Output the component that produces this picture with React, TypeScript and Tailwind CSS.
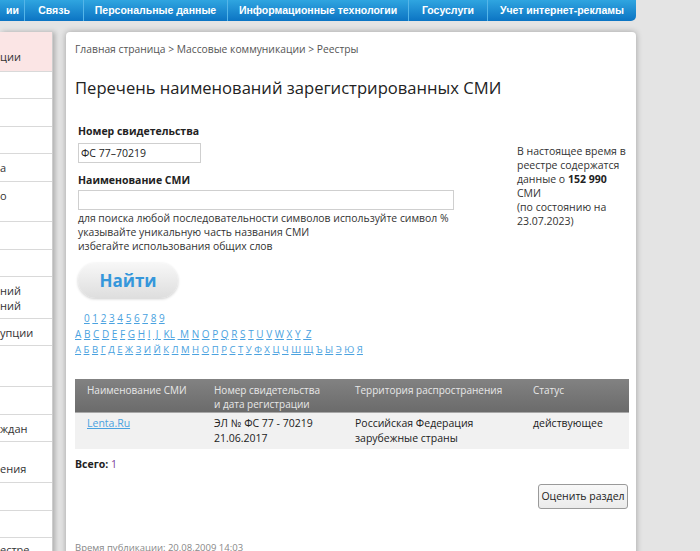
import React from "react";

const navItems: { label: string; w: string; cls?: string }[] = [
  { label: "ии", w: "w-[25px]", cls: "justify-end pr-[5px]" },
  { label: "Связь", w: "w-[59px]" },
  { label: "Персональные данные", w: "w-[144px]" },
  { label: "Информационные технологии", w: "w-[181px]" },
  { label: "Госуслуги", w: "w-[79px]" },
  { label: "Учет интернет-рекламы", w: "w-[148px]" },
];

const sideRows: { text: React.ReactNode; h: string; cls?: string }[] = [
  { text: "ции", h: "h-[40px]", cls: "bg-[#fbe5e5] items-end pb-[7px]" },
  { text: "", h: "h-[27px]" },
  { text: "", h: "h-[28px]" },
  { text: "", h: "h-[27px]" },
  { text: "а", h: "h-[28px]", cls: "items-center" },
  { text: "о", h: "h-[40px]", cls: "items-start pt-[6px]" },
  { text: "", h: "h-[28px]" },
  { text: "", h: "h-[27px]" },
  {
    text: (
      <span>
        ний
        <br />
        ний
      </span>
    ),
    h: "h-[42px]",
    cls: "items-center",
  },
  { text: "упции", h: "h-[27px]", cls: "items-center" },
  { text: "", h: "h-[41px]" },
  { text: "", h: "h-[28px]" },
  { text: "ждан", h: "h-[27px]", cls: "items-center" },
  { text: "ения", h: "h-[41px]", cls: "items-end pb-[6px]" },
  { text: "", h: "h-[28px]" },
  { text: "", h: "h-[27px]" },
  { text: "естре", h: "h-[27px]", cls: "items-start pt-[4px]" },
];

const digits = ["0", "1", "2", "3", "4", "5", "6", "7", "8", "9"];
const latin = ["A", "B", "C", "D", "E", "F", "G", "H", "I", "\u00a0J\u00a0", "KL", "\u00a0M", "N", "O", "P", "Q", "R", "S", "T", "U", "V", "W", "X", "Y", "\u00a0Z"];
const cyr = ["А", "Б", "В", "Г", "Д", "Е", "Ж", "З", "И", "Й", "К", "Л", "М", "Н", "О", "П", "Р", "С", "Т", "У", "Ф", "Х", "Ц", "Ч", "Ш", "Щ", "Ъ", "Ы", "Э", "Ю", "Я"];

function LinkRow({ items, cls }: { items: string[]; cls: string }) {
  return (
    <div className={"leading-[15px] text-[#4aa2e0] whitespace-pre " + cls}>
      {items.map((c, i) => (
        <React.Fragment key={i}>
          <a className="underline decoration-[#4aa2e0]">{c}</a>
          {i < items.length - 1 ? " " : ""}
        </React.Fragment>
      ))}
    </div>
  );
}

export default function App() {
  return (
    <div className="w-[700px] h-[551px] overflow-hidden bg-[#e4e4e4] font-['Open_Sans',sans-serif] text-[#333]">
      {/* top nav */}
      <nav className="flex h-[21px] w-[636px] rounded-br-[5px] bg-gradient-to-b from-[#2fa5e0] to-[#0b74c3] font-['Liberation_Sans',Arial,sans-serif] text-[10.5px] font-bold text-white">
        {navItems.map((n, i) => (
          <div
            key={n.label}
            className={
              "flex h-full items-center whitespace-nowrap " +
              n.w +
              " " +
              (n.cls ?? "justify-center") +
              (i < navItems.length - 1 ? " border-r border-[#55b5e8]" : "")
            }
          >
            {n.label}
          </div>
        ))}
      </nav>

      <div className="mt-[11px] flex gap-[13px]">
        {/* sidebar */}
        <aside className="w-[53px] shrink-0 self-start overflow-hidden border-r border-[#cdcdcd] bg-white text-[11px] leading-[15px] text-[#333] shadow-[2px_0_5px_rgba(0,0,0,0.25)]">
          {sideRows.map((r, i) => (
            <div key={i} className={"flex border-b border-[#d9d9d9] whitespace-nowrap " + r.h + " " + (r.cls ?? "")}>
              {r.text}
            </div>
          ))}
        </aside>

        {/* main card */}
        <main className="h-[540px] w-[570px] shrink-0 rounded-[4px] bg-white pl-[9px] pr-[8px] pt-[10px] shadow-[0_0_6px_rgba(0,0,0,0.3)]">
          <div className="text-[10.3px] leading-[15px] text-[#555]">
            Главная страница &gt; Массовые коммуникации &gt; Реестры
          </div>
          <h1 className="mt-[19px] text-[16.6px] leading-[24px] font-normal text-[#222]">
            Перечень наименований зарегистрированных СМИ
          </h1>

          <div className="mt-[24px] flex">
            <div className="w-[440px] pl-[3px]">
              <div className="text-[10.5px] font-bold leading-[15px] text-[#222]">Номер свидетельства</div>
              <input
                readOnly
                value="ФС 77–70219"
                className="mt-[4px] block h-[20px] w-[123px] border border-[#cfcfcf] px-[2px] text-[10.5px] text-[#222] outline-none"
              />
              <div className="mt-[10px] text-[10.5px] font-bold leading-[15px] text-[#222]">Наименование СМИ</div>
              <input
                readOnly
                value=""
                className="mt-[2px] block h-[20px] w-[376px] border border-[#cfcfcf] px-[2px] text-[11px] outline-none"
              />
              <div className="mt-[1px] text-[10.4px] leading-[14px] text-[#333] whitespace-nowrap">
                для поиска любой последовательности символов используйте символ %
                <br />
                указывайте уникальную часть названия СМИ
                <br />
                избегайте использования общих слов
              </div>
              <button className="mt-[10px] flex h-[35px] w-[100px] items-center justify-center rounded-[18px] bg-gradient-to-b from-[#f7f7f7] to-[#dedede] text-[17px] font-bold text-[#3597db] shadow-[0_1px_3px_rgba(0,0,0,0.2)]">
                Найти
              </button>
            </div>
            <div className="ml-[2px] mt-[20px] text-[10.5px] leading-[14px] text-[#333] whitespace-nowrap">
              В настоящее время в
              <br />
              реестре содержатся
              <br />
              данные о <b className="text-[#222]">152 990</b>
              <br />
              СМИ
              <br />
              (по состоянию на
              <br />
              23.07.2023)
            </div>
          </div>

          <div className="mt-[13px]">
            <LinkRow items={digits} cls="pl-[9px] text-[10px]" />
            <LinkRow items={latin} cls="mt-[1px] text-[10px]" />
            <LinkRow items={cyr} cls="text-[9.6px]" />
          </div>

          {/* table */}
          <div className="mt-[22px] w-[554px] text-[10.5px]">
            <div className="grid h-[34px] grid-cols-[127px_141px_178px_108px] border-b border-[#a8a8a8] bg-gradient-to-b from-[#828282] to-[#6b6b6b] text-[10px] leading-[14px] text-[#e8e8e8]">
              <div className="pl-[12px] pt-[4px]">Наименование СМИ</div>
              <div className="pl-[12px] pt-[4px]">
                Номер свидетельства
                <br />
                и дата регистрации
              </div>
              <div className="pl-[12px] pt-[4px]">Территория распространения</div>
              <div className="pl-[12px] pt-[4px]">Статус</div>
            </div>
            <div className="grid h-[36px] grid-cols-[127px_141px_178px_108px] bg-[#f1f1f1] leading-[15px] text-[#222]">
              <div className="pl-[12px] pt-[3px]">
                <a className="text-[#4aa2e0] underline">Lenta.Ru</a>
              </div>
              <div className="pl-[12px] pt-[3px]">
                ЭЛ № ФС 77 - 70219
                <br />
                21.06.2017
              </div>
              <div className="pl-[12px] pt-[3px]">
                Российская Федерация
                <br />
                зарубежные страны
              </div>
              <div className="pl-[12px] pt-[3px]">действующее</div>
            </div>
          </div>

          <div className="mt-[8px] text-[10.5px] leading-[15px] text-[#222]">
            <b>Всего:</b> <span className="text-[#7a3f9a]">1</span>
          </div>

          <div className="mt-[12px] flex w-[553px] justify-end">
            <button className="h-[25px] w-[90px] rounded-[3px] border border-[#9a9a9a] bg-gradient-to-b from-[#f8f8f8] to-[#ebebeb] text-[10.5px] text-[#222]">
              Оценить раздел
            </button>
          </div>

          <div className="mt-[32px] text-[9.5px] leading-[13px] text-[#888]">
            Время публикации: 20.08.2009 14:03
          </div>
        </main>
      </div>
    </div>
  );
}
